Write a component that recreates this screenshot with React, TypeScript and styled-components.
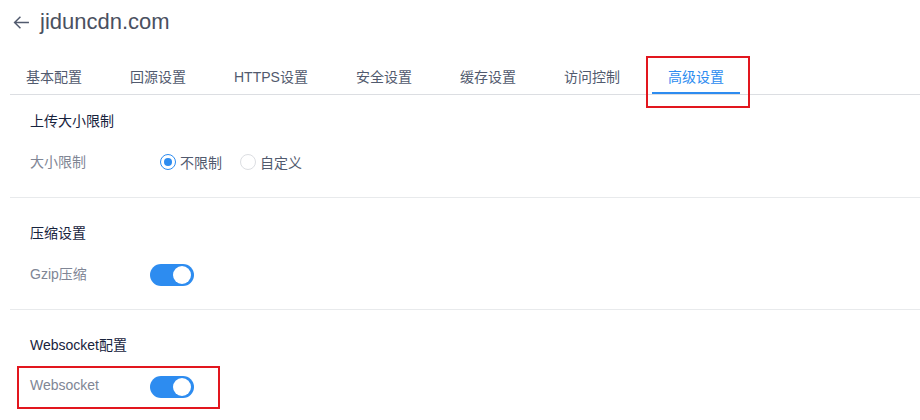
import * as React from 'react';
import styled, { createGlobalStyle } from 'styled-components';

const tabs = ['基本配置', '回源设置', 'HTTPS设置', '安全设置', '缓存设置', '访问控制', '高级设置'];

const App = () => {
  const [sizeMode, setSizeMode] = React.useState('none');
  const [gzip, setGzip] = React.useState(true);
  const [ws, setWs] = React.useState(true);

  return (
    <Page>
      <GlobalStyle />
      <Header>
        <BackIcon viewBox="0 0 16 16">
          <path d="M15 8H1.5M7 2.5L1.5 8L7 13.5" />
        </BackIcon>
        <Title>jiduncdn.com</Title>
      </Header>

      <TabBar>
        {tabs.map((t, i) => (
          <Tab key={t} active={i === tabs.length - 1}>
            {t}
            {i === tabs.length - 1 && <TabMark />}
          </Tab>
        ))}
      </TabBar>

      <Section first>
        <SectionTitle>上传大小限制</SectionTitle>
        <Row>
          <Label>大小限制</Label>
          <RadioGroup>
            <RadioItem onClick={() => setSizeMode('none')}>
              <RadioDot checked={sizeMode === 'none'} />
              不限制
            </RadioItem>
            <RadioItem onClick={() => setSizeMode('custom')}>
              <RadioDot checked={sizeMode === 'custom'} />
              自定义
            </RadioItem>
          </RadioGroup>
        </Row>
      </Section>

      <Section>
        <SectionTitle>压缩设置</SectionTitle>
        <Row>
          <Label>Gzip压缩</Label>
          <Switch on={gzip} onClick={() => setGzip(!gzip)} />
        </Row>
      </Section>

      <Section last>
        <SectionTitle>Websocket配置</SectionTitle>
        <Row>
          <RowMark />
          <Label>Websocket</Label>
          <Switch on={ws} onClick={() => setWs(!ws)} />
        </Row>
      </Section>
    </Page>
  );
};

// STYLED COMPONENTS

const GlobalStyle = createGlobalStyle`
  body {
    margin: 0;
    background: #fff;
    font-family: "Liberation Sans", "Noto Sans CJK SC", sans-serif;
    font-size: 14px;
  }
`;

const Page = styled.div`
  width: 920px;
  height: 420px;
  overflow: hidden;
  background: #fff;
`;

const Header = styled.div`
  display: flex;
  align-items: center;
  height: 44px;
  padding-left: 13px;
`;

const BackIcon = styled.svg`
  width: 17px;
  height: 17px;
  fill: none;
  stroke: #515a6e;
  stroke-width: 1.4;
  margin-right: 10px;
`;

const Title = styled.span`
  font-size: 22px;
  color: #4a5060;
  line-height: 1;
  margin-top: -1px;
`;

const TabBar = styled.div`
  display: flex;
  gap: 16px;
  margin: 16px 0 0 10px;
  border-bottom: 1px solid #dcdee2;
`;

const Tab = styled.div<{ active?: boolean }>`
  position: relative;
  height: 34px;
  line-height: 34px;
  padding: 0 16px;
  color: ${p => (p.active ? '#2d8cf0' : '#515a6e')};
  box-shadow: ${p => (p.active ? 'inset 0 -2px 0 #2d8cf0' : 'none')};
  cursor: pointer;
`;

const TabMark = styled.span`
  position: absolute;
  left: -6px;
  top: -4px;
  width: 100px;
  height: 48px;
  border: 2px solid #e2161e;
  pointer-events: none;
`;

const Section = styled.div<{ first?: boolean; last?: boolean }>`
  margin-left: 10px;
  padding: ${p => (p.first ? '16px' : '25px')} 0 18px 20px;
  border-bottom: ${p => (p.last ? 'none' : '1px solid #e8eaec')};
`;

const SectionTitle = styled.div`
  height: 20px;
  line-height: 20px;
  color: #17233d;
  margin-bottom: 16px;
`;

const Row = styled.div`
  position: relative;
  display: flex;
  align-items: center;
  height: 32px;
`;

const RowMark = styled.span`
  position: absolute;
  left: -13px;
  top: -5px;
  width: 199px;
  height: 39px;
  border: 2px solid #e2161e;
  pointer-events: none;
`;

const Label = styled.div`
  width: 120px;
  padding-bottom: 4px;
  color: #808695;
`;

const RadioGroup = styled.div`
  display: flex;
  gap: 18px;
  margin-left: 10px;
  padding-bottom: 2px;
  color: #515a6e;
`;

const RadioItem = styled.label`
  display: flex;
  align-items: center;
  gap: 4px;
  cursor: pointer;
`;

const RadioDot = styled.span<{ checked?: boolean }>`
  position: relative;
  box-sizing: border-box;
  width: 16px;
  height: 16px;
  border-radius: 50%;
  border: 1px solid ${p => (p.checked ? '#2d8cf0' : '#dcdee2')};
  background: #fff;

  &::after {
    content: '';
    position: absolute;
    left: 3px;
    top: 3px;
    width: 8px;
    height: 8px;
    border-radius: 50%;
    background: #2d8cf0;
    display: ${p => (p.checked ? 'block' : 'none')};
  }
`;

const Switch = styled.span<{ on?: boolean }>`
  position: relative;
  box-sizing: border-box;
  width: 44px;
  height: 22px;
  border-radius: 11px;
  background: ${p => (p.on ? '#2d8cf0' : '#ccc')};
  cursor: pointer;

  &::after {
    content: '';
    position: absolute;
    top: 2px;
    left: ${p => (p.on ? '23px' : '2px')};
    width: 18px;
    height: 18px;
    border-radius: 50%;
    background: #fff;
  }
`;

export default App;
